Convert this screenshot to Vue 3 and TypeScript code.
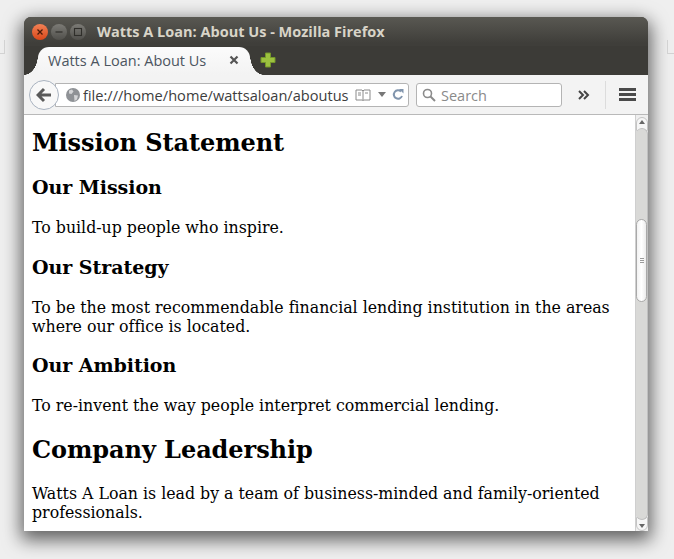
<script setup lang="ts">
type Block = { tag: 'h1' | 'h2' | 'p'; text: string }

const blocks: Block[] = [
  { tag: 'h1', text: 'Mission Statement' },
  { tag: 'h2', text: 'Our Mission' },
  { tag: 'p', text: 'To build-up people who inspire.' },
  { tag: 'h2', text: 'Our Strategy' },
  { tag: 'p', text: 'To be the most recommendable financial lending institution in the areas where our office is located.' },
  { tag: 'h2', text: 'Our Ambition' },
  { tag: 'p', text: 'To re-invent the way people interpret commercial lending.' },
  { tag: 'h1', text: 'Company Leadership' },
  { tag: 'p', text: 'Watts A Loan is lead by a team of business-minded and family-oriented professionals.' }
]
</script>

<template>
  <div class="desktop">
    <span class="edge edge-left"></span>
    <span class="edge edge-right"></span>
    <div class="window">
      <header class="titlebar">
        <div class="controls">
          <span class="ctl close">
            <svg viewBox="0 0 10 10" width="10" height="10"><path d="M2.5 2.5l5 5M7.5 2.5l-5 5" stroke="#4a1a08" stroke-width="1.3" /></svg>
          </span>
          <span class="ctl">
            <svg viewBox="0 0 10 10" width="10" height="10"><path d="M1.5 5h7" stroke="#2f2e2a" stroke-width="1.2" /></svg>
          </span>
          <span class="ctl">
            <svg viewBox="0 0 10 10" width="10" height="10"><rect x="1.5" y="1.5" width="7" height="7" fill="none" stroke="#2f2e2a" stroke-width="1.1" /></svg>
          </span>
        </div>
        <div class="title">Watts A Loan: About Us - Mozilla Firefox</div>
      </header>
      <div class="tabstrip">
        <div class="tab">
          <span class="tab-label">Watts A Loan: About Us</span>
          <svg class="tab-close" viewBox="0 0 10 10" width="10" height="10"><path d="M1.5 1.5l7 7M8.5 1.5l-7 7" stroke="#555" stroke-width="2.2" /></svg>
        </div>
        <svg class="new-tab" viewBox="0 0 16 16" width="16" height="16">
          <path d="M5.5 1h5v4.5H15v5h-4.5V15h-5v-4.5H1v-5h4.5z" fill="#9cc13f" stroke="#74962a" stroke-width="1" />
        </svg>
      </div>
      <div class="toolbar">
        <div class="back">
          <svg viewBox="0 0 16 16" width="16" height="16"><path d="M8 2L2 8l6 6M2.5 8H15" fill="none" stroke="#5a5a5a" stroke-width="3" /></svg>
        </div>
        <div class="urlbar">
          <svg class="globe" viewBox="0 0 14 14" width="14" height="14">
            <circle cx="7" cy="7" r="7" fill="#8f9296" />
            <path d="M3 2.5l3-1 1.5 2-2 2.5-2.5-.5zM8 7l4 .5-1 4-2.5 1.5z" fill="#d4d5d7" />
          </svg>
          <span class="url">file:///home/home/wattsaloan/aboutus</span>
          <svg class="reader" viewBox="0 0 16 12" width="16" height="12"><path d="M1 1h6l1 1 1-1h6v10H9l-1 .5L7 11H1zM8 2v9M3 4h3M3 6h3M10 4h3" fill="none" stroke="#8a8a8a" stroke-width="1" /></svg>
          <svg class="drop" viewBox="0 0 8 5" width="8" height="5"><path d="M0 0h8L4 5z" fill="#777" /></svg>
          <svg class="reload" viewBox="0 0 12 13" width="12" height="13"><path d="M10 8a4.2 4.2 0 1 1-1-4.5" fill="none" stroke="#8195ad" stroke-width="2" /><path d="M7 1h4.5v4.5z" fill="#8195ad" /></svg>
        </div>
        <div class="searchbar">
          <svg viewBox="0 0 14 14" width="14" height="14"><circle cx="5.5" cy="5.5" r="4" fill="none" stroke="#8b8b8b" stroke-width="1.6" /><path d="M8.5 8.5l4.5 4.5" stroke="#8b8b8b" stroke-width="2" /></svg>
          <span class="search-label">Search</span>
        </div>
        <svg class="overflow" viewBox="0 0 12 10" width="12" height="10"><path d="M1 1l4 4-4 4M6 1l4 4-4 4" fill="none" stroke="#444" stroke-width="2" /></svg>
        <span class="divider"></span>
        <div class="menu"><i></i><i></i><i></i></div>
      </div>
      <div class="viewport">
        <main class="page">
          <component :is="b.tag" v-for="(b, i) in blocks" :key="i">{{ b.text }}</component>
        </main>
        <aside class="scrollbar">
          <div class="sb-btn sb-up"><span></span></div>
          <div class="sb-track">
            <div class="sb-thumb"><b></b><b></b><b></b></div>
          </div>
          <div class="sb-btn sb-down"><span></span></div>
        </aside>
      </div>
    </div>
  </div>
</template>

<style>
html,
body {
  margin: 0;
  background: #efefef;
}
</style>

<style scoped>
.desktop {
  position: relative;
  width: 674px;
  height: 559px;
  box-sizing: border-box;
  padding: 17px 26px 28px 24px;
  overflow: hidden;
  background: #efefef;
}

.edge {
  position: absolute;
  top: 40px;
  width: 6px;
  height: 13px;
  border-bottom: 1px solid #d2d2d2;
}

.edge-left {
  left: -2px;
  border-right: 1px solid #d2d2d2;
}

.edge-right {
  right: 0;
  border-left: 1px solid #d2d2d2;
}

.window {
  height: 514px;
  display: flex;
  flex-direction: column;
  border-radius: 7px 7px 0 0;
  background: #3c3b37;
  box-shadow: 0 6px 18px 3px rgba(0, 0, 0, 0.6);
  font-family: "Open Sans", "Noto Sans", sans-serif;
}

.titlebar {
  height: 29px;
  flex: none;
  display: flex;
  align-items: center;
  padding: 0 0 0 8px;
  border-radius: 7px 7px 0 0;
  background: linear-gradient(#595852, #3f3e3a 90%);
}

.controls {
  display: flex;
  gap: 3px;
}

.ctl {
  width: 16px;
  height: 16px;
  border-radius: 50%;
  display: flex;
  align-items: center;
  justify-content: center;
  background: linear-gradient(#7c7b76, #504f4b);
}

.close {
  background: linear-gradient(#f28155, #d9471a);
}

.title {
  margin-left: 11px;
  font-size: 14.5px;
  font-weight: 700;
  color: #d8d4c8;
  white-space: nowrap;
}

.tabstrip {
  height: 29px;
  flex: none;
  display: flex;
  align-items: flex-end;
  background: #3c3b37;
}

.tab {
  position: relative;
  width: 212px;
  height: 28px;
  margin-left: 14px;
  display: flex;
  align-items: center;
  padding: 0 10px 2px;
  box-sizing: border-box;
  border-radius: 11px 11px 0 0;
  background: linear-gradient(#fbfbfb, #f3f3f3);
}

.tab::before,
.tab::after {
  content: "";
  position: absolute;
  bottom: 0;
  width: 14px;
  height: 20px;
}

.tab::before {
  left: -14px;
  background: radial-gradient(ellipse 14px 20px at 0 0, #3c3b37 98%, #f3f3f3 100%);
}

.tab::after {
  right: -14px;
  background: radial-gradient(ellipse 14px 20px at 100% 0, #3c3b37 98%, #f3f3f3 100%);
}

.tab-label {
  flex: 1;
  font-size: 14.5px;
  color: #4c5560;
  white-space: nowrap;
}

.tab-close {
  flex: none;
  margin-right: 1px;
}

.new-tab {
  margin: 0 0 7px 10px;
  position: relative;
  z-index: 1;
}

.toolbar {
  height: 40px;
  flex: none;
  display: flex;
  align-items: center;
  padding: 0 0 0 5px;
  box-sizing: border-box;
  background: #f3f3f3;
  border-bottom: 1px solid #b9b9b9;
}

.back {
  width: 30px;
  height: 30px;
  flex: none;
  display: flex;
  align-items: center;
  justify-content: center;
  border: 1px solid #a9b3c0;
  border-radius: 50%;
  background: #f8f8f8;
  box-sizing: border-box;
  position: relative;
  z-index: 1;
}

.urlbar {
  width: 354px;
  height: 24px;
  flex: none;
  margin-left: -4px;
  display: flex;
  align-items: center;
  box-sizing: border-box;
  padding: 0 4px 0 10px;
  background: #fff;
  border: 1px solid #b4b4b4;
  border-radius: 0 3px 3px 0;
  font-size: 14.6px;
  color: #3d3d3d;
}

.url {
  flex: 1;
  margin-left: 3px;
  white-space: nowrap;
  overflow: hidden;
}

.reader {
  flex: none;
  margin: 0 7px 0 5px;
}

.drop {
  flex: none;
  margin-right: 6px;
}

.reload {
  flex: none;
}

.searchbar {
  width: 146px;
  height: 24px;
  flex: none;
  margin-left: 7px;
  display: flex;
  align-items: center;
  gap: 5px;
  box-sizing: border-box;
  padding: 0 5px;
  background: #fff;
  border: 1px solid #b4b4b4;
  border-radius: 3px;
  font-size: 14.5px;
  color: #8a8a8a;
}

.search-label {
  padding-top: 2px;
}

.overflow {
  flex: none;
  margin-left: 16px;
}

.divider {
  width: 1px;
  height: 28px;
  flex: none;
  margin-left: 15px;
  background: #dcdcdc;
}

.menu {
  width: 17px;
  flex: none;
  margin-left: 13px;
  display: flex;
  flex-direction: column;
  gap: 2px;
}

.menu i {
  display: block;
  height: 3px;
  background: #4a4a4a;
}

.viewport {
  flex: 1;
  min-height: 0;
  display: flex;
  background: #fff;
}

.page {
  flex: 1;
  min-width: 0;
  overflow: hidden;
  padding: 0 0 0 8px;
  font-family: "DejaVu Serif", serif;
  font-size: 15.8px;
  letter-spacing: -0.01px;
  color: #000;
}

.page h1 {
  font-size: 24px;
  letter-spacing: -0.06px;
  font-weight: 700;
  margin: 20px 0 19px;
}

.page h1:first-child {
  margin-top: 13px;
}

.page h2 {
  font-size: 19px;
  letter-spacing: -0.05px;
  font-weight: 700;
  margin: 0;
}

.page p {
  margin: 20px 0 18.7px;
}

.scrollbar {
  width: 13px;
  flex: none;
  display: flex;
  flex-direction: column;
  padding-top: 2px;
  background: #efefef;
  border-left: 1px solid #cfcfcf;
  box-sizing: border-box;
}

.sb-btn {
  height: 14px;
  flex: none;
  display: flex;
  justify-content: center;
  background: #f6f6f6;
  border: 1px solid #c4c4c4;
  box-sizing: border-box;
}

.sb-up {
  align-items: flex-start;
  padding-top: 2px;
  margin-bottom: -3px;
  border-radius: 6px 6px 0 0;
}

.sb-down {
  align-items: flex-end;
  padding-bottom: 2px;
  margin-top: -3px;
  border-radius: 0 0 6px 6px;
}

.sb-up span,
.sb-down span {
  width: 0;
  height: 0;
  border-left: 3px solid transparent;
  border-right: 3px solid transparent;
}

.sb-up span {
  border-bottom: 4px solid #666;
}

.sb-down span {
  border-top: 4px solid #666;
}

.sb-track {
  position: relative;
  z-index: 1;
  flex: 1;
  padding-top: 90px;
  background: #d9d9d7;
  border: 1px solid #c0c0c0;
  border-width: 1px 1px 1px 0;
  border-radius: 6px;
}

.sb-thumb {
  height: 83px;
  display: flex;
  flex-direction: column;
  align-items: center;
  justify-content: center;
  gap: 1px;
  box-sizing: border-box;
  border: 1px solid #a9a9a9;
  border-radius: 6px;
  background: linear-gradient(90deg, #f2f2f2, #fff 50%, #ececec);
}

.sb-thumb b {
  display: block;
  width: 4px;
  height: 1px;
  background: #9a9a9a;
}
</style>
